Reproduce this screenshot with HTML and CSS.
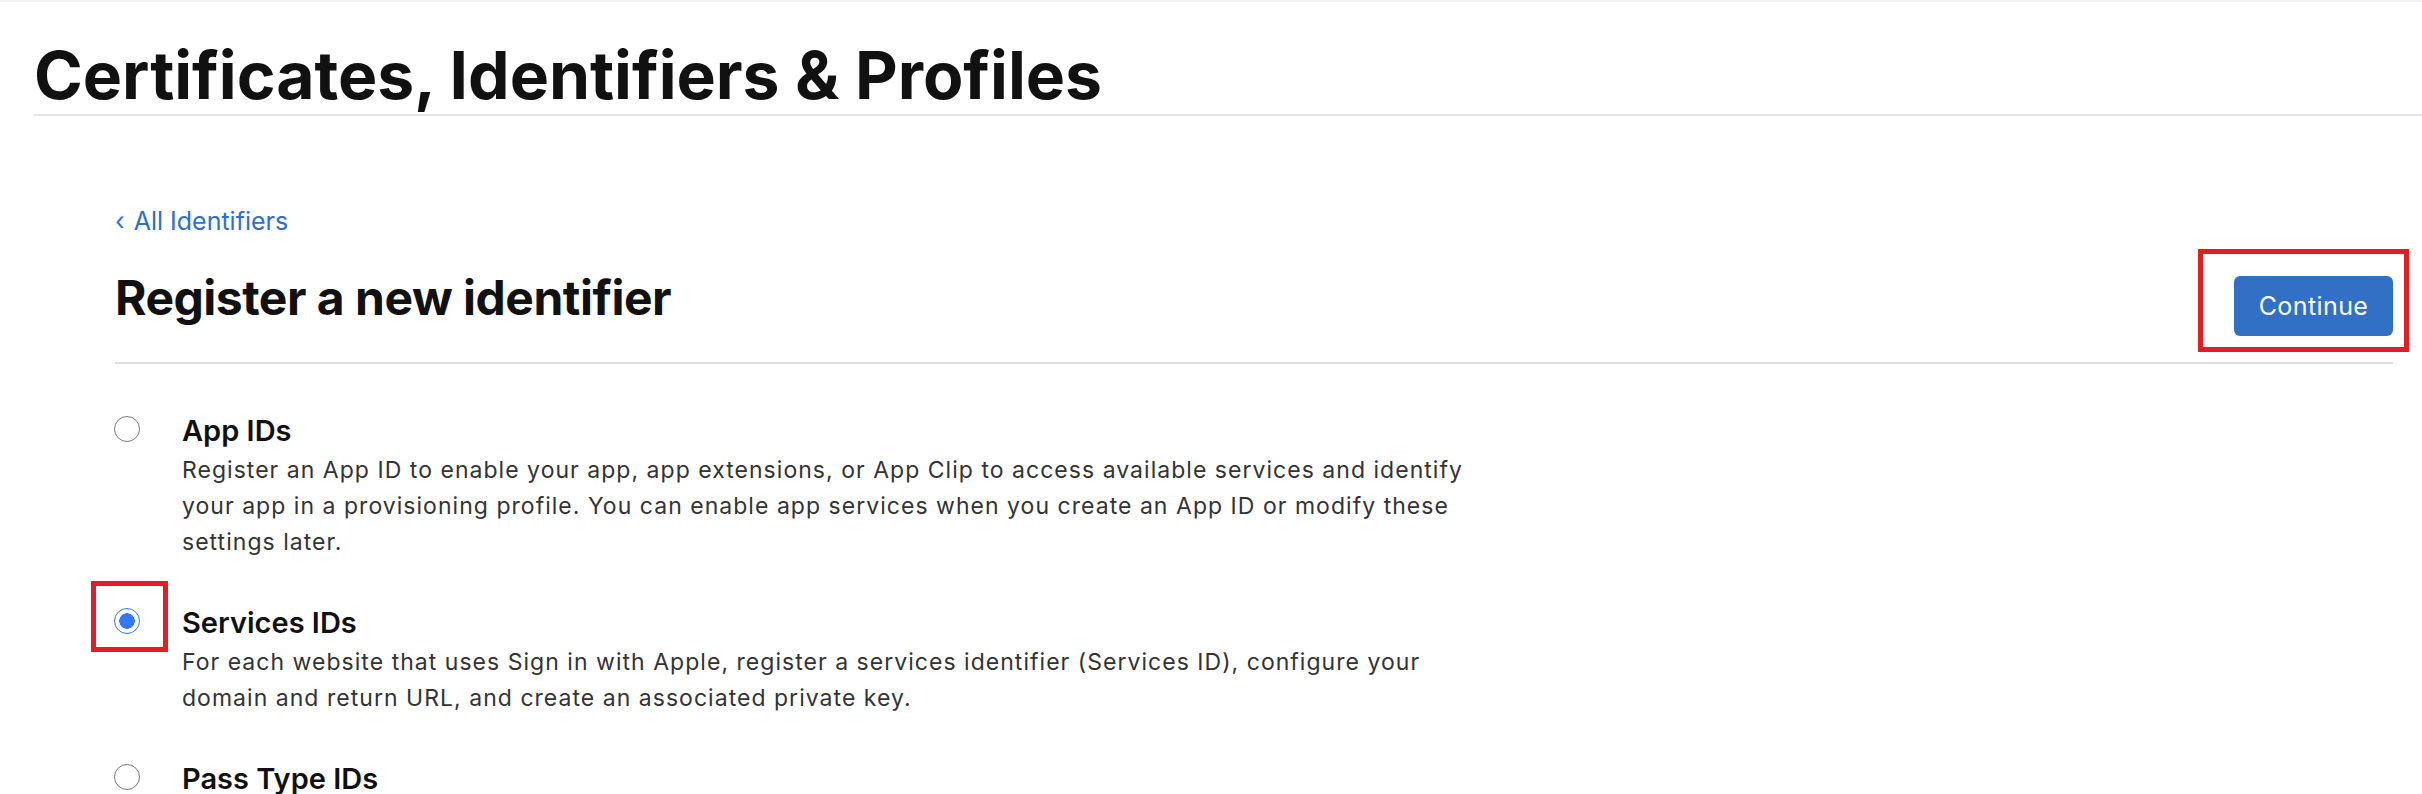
FILE: index.html
```html
<!DOCTYPE html>
<html lang="en">
<head>
<meta charset="utf-8">
<title>Certificates, Identifiers &amp; Profiles</title>
<link rel="stylesheet" href="styles.css">
</head>
<body>
<div class="topbar"></div>
<header class="page-header">
  <h1 class="page-title">Certificates, Identifiers &amp; Profiles</h1>
</header>
<main class="content">
  <a class="back-link" href="#"><span class="chev">‹</span> All Identifiers</a>
  <div class="heading-row">
    <h2 class="heading">Register a new identifier</h2>
    <div class="btn-wrap">
      <button class="btn-continue" type="button">Continue</button>
      <span class="annot annot-btn"></span>
    </div>
  </div>
  <div class="options">
    <label class="option">
      <span class="radio-wrap"><span class="radio"></span></span>
      <span class="option-body">
        <span class="option-title">App IDs</span>
        <span class="option-desc">Register an App ID to enable your app, app extensions, or App Clip to access available services and identify your app in a provisioning profile. You can enable app services when you create an App ID or modify these settings later.</span>
      </span>
    </label>
    <label class="option">
      <span class="radio-wrap"><span class="radio checked"></span><span class="annot annot-radio"></span></span>
      <span class="option-body">
        <span class="option-title">Services IDs</span>
        <span class="option-desc">For each website that uses Sign in with Apple, register a services identifier (Services ID), configure your domain and return URL, and create an associated private key.</span>
      </span>
    </label>
    <label class="option">
      <span class="radio-wrap"><span class="radio"></span></span>
      <span class="option-body">
        <span class="option-title">Pass Type IDs</span>
      </span>
    </label>
  </div>
</main>
</body>
</html>
```

FILE: styles.css
```css
* { box-sizing: border-box; }
html, body {
  margin: 0;
  padding: 0;
  background: #fff;
  font-family: Inter, "Noto Sans", "Liberation Sans", sans-serif;
  color: #111;
  overflow: hidden;
}
.topbar {
  height: 2px;
  background: #f3f3f3;
}
.page-header {
  margin-left: 34px;
  padding-top: 40px;
  padding-bottom: 6px;
  border-bottom: 2px solid #e4e4e4;
}
.page-title {
  margin: 0;
  font-size: 66px;
  line-height: 66px;
  font-weight: 700;
  letter-spacing: -0.05px;
  color: #111;
}
.content {
  padding: 0 29px 0 115px;
}
.back-link {
  display: block;
  margin-top: 93px;
  font-size: 25px;
  line-height: 25px;
  color: #2e6fc7;
  text-decoration: none;
}
.chev { margin-right: 2px; }
.heading-row {
  display: flex;
  justify-content: space-between;
  align-items: flex-start;
  margin-top: 40px;
  padding-bottom: 26px;
  border-bottom: 2px solid #dddddd;
}
.heading {
  margin: 0;
  font-size: 48px;
  line-height: 48px;
  font-weight: 700;
  letter-spacing: -0.5px;
  color: #111;
}
.btn-wrap {
  position: relative;
  margin-top: 2px;
}
.btn-continue {
  display: block;
  width: 159px;
  height: 60px;
  border: 0;
  border-radius: 6px;
  background: #3170c5;
  color: #fff;
  font-family: inherit;
  font-size: 25px;
  letter-spacing: 0.4px;
  padding: 0;
}
.annot {
  position: absolute;
  border: 5px solid #e41d25;
  pointer-events: none;
}
.annot-btn {
  left: -36px;
  right: -16px;
  top: -27px;
  bottom: -16px;
}
.options {
  padding-top: 47px;
  display: flex;
  flex-direction: column;
  gap: 43px;
}
.option {
  display: flex;
  align-items: flex-start;
  gap: 42px;
}
.radio-wrap {
  position: relative;
  flex: 0 0 26px;
  width: 26px;
  height: 26px;
  margin-top: 5px;
  margin-left: -1px;
}
.radio {
  display: block;
  width: 26px;
  height: 26px;
  border-radius: 50%;
  border: 1.5px solid #7a7a7a;
  background: #fff;
}
.radio.checked {
  border-color: #3478f6;
  background: radial-gradient(circle, #3478f6 0 7.5px, #fff 8px);
}
.annot-radio {
  left: -23px;
  right: -28px;
  top: -27px;
  bottom: -18px;
}
.option-body {
  display: flex;
  flex-direction: column;
}
.option-title {
  font-size: 29px;
  line-height: 40px;
  font-weight: 600;
  color: #111;
}
.option-desc {
  margin-top: 1px;
  max-width: 1300px;
  font-size: 23px;
  line-height: 36px;
  letter-spacing: 1.03px;
  color: #333;
}
```
